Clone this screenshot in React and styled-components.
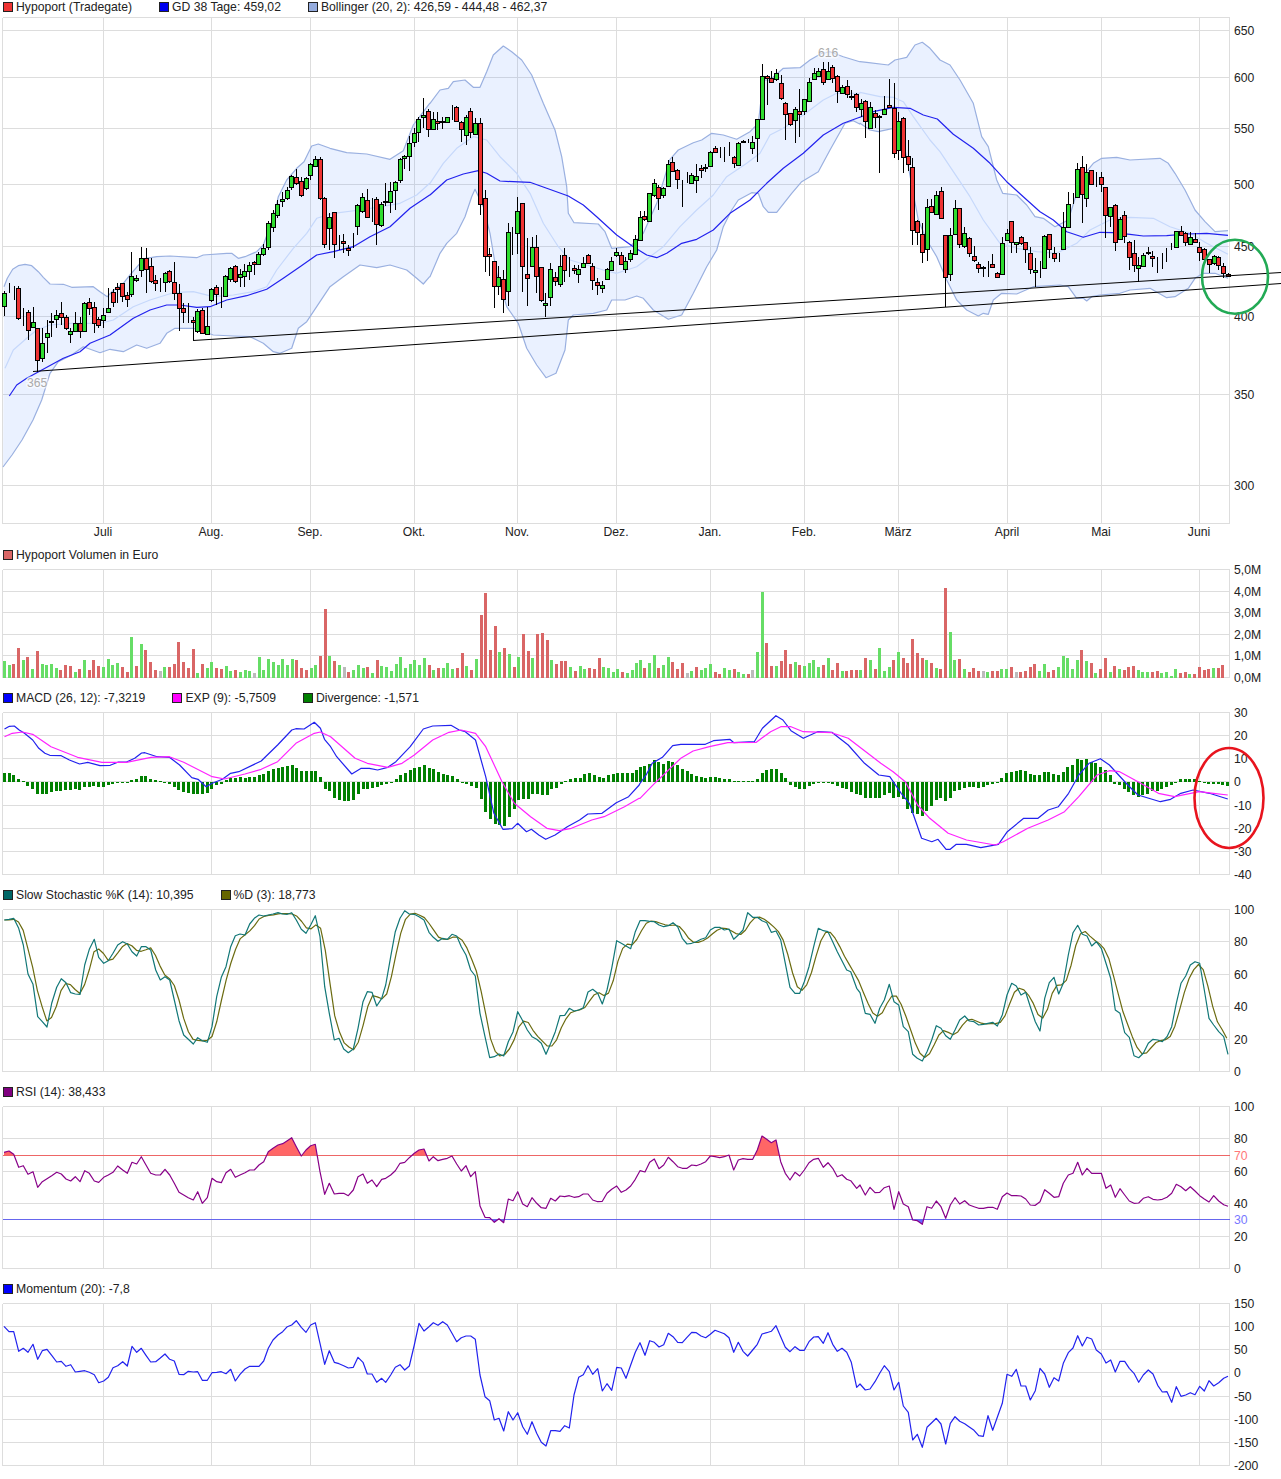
import React from 'react';
import styled, { createGlobalStyle } from 'styled-components';

const GlobalStyle = createGlobalStyle`
  html, body { margin: 0; padding: 0; background: #fff; }
  body { font-family: "Liberation Sans", Arial, sans-serif; font-size: 12.2px; color: #222; }
`;

const Page = styled.div`
  display: flex;
  flex-direction: column;
  width: 1281px;
  height: 1479px;
  overflow: hidden;
`;

const Panel = styled.section`
  display: flex;
  flex-direction: column;
`;

const Legend = styled.div`
  display: flex;
  align-items: center;
  gap: 27px;
  height: ${(p) => p.$height}px;
  padding-left: 3px;
  white-space: nowrap;
`;

const LegendItem = styled.span`
  display: flex;
  align-items: center;
  gap: 3px;
`;

const Swatch = styled.i`
  display: block;
  width: 10px;
  height: 10px;
  box-sizing: border-box;
  border: 1px solid #222;
  background: ${(p) => p.$color};
`;

const Plot = styled.svg`
  display: block;
  overflow: hidden;
`;

const GridLine = styled.line`
  stroke: #ddd;
  stroke-width: 1;
  shape-rendering: crispEdges;
`;

const LevelLine = styled.line`
  stroke: ${(p) => p.$color};
  stroke-width: 1;
  shape-rendering: crispEdges;
`;

const Curve = styled.polyline`
  fill: none;
  stroke: ${(p) => p.$color};
  stroke-width: ${(p) => p.$width || 1.2};
  stroke-linejoin: round;
`;

const Band = styled.polygon`
  fill: #5588ff;
  fill-opacity: 0.12;
  stroke: none;
`;

const Zone = styled.polygon`
  fill: ${(p) => p.$color};
  stroke: none;
`;

const AxisLabel = styled.text`
  font-family: "Liberation Sans", Arial, sans-serif;
  font-size: 12.2px;
  fill: ${(p) => p.$color || '#222'};
`;

const MonthLabel = styled(AxisLabel)`
  text-anchor: middle;
`;

const PeakLabel = styled.text`
  font-family: "Liberation Sans", Arial, sans-serif;
  font-size: 12.2px;
  fill: #aaa;
  stroke: rgba(255, 255, 255, 0.6);
  stroke-width: 3px;
  paint-order: stroke;
`;

const Wick = styled.line`
  stroke: #000;
  stroke-width: 1;
  shape-rendering: crispEdges;
`;

const Body = styled.rect`
  fill: ${(p) => p.$color};
  stroke: #000;
  stroke-width: 1;
  shape-rendering: crispEdges;
`;

const Bar = styled.rect`
  fill: ${(p) => p.$color};
  shape-rendering: crispEdges;
`;

const TrendLine = styled.line`
  stroke: #000;
  stroke-width: 1;
`;

const Marker = styled.ellipse`
  fill: none;
  stroke: ${(p) => p.$color};
  stroke-width: 2.6;
`;

const MONTHS = [
  ['Juli', 103],
  ['Aug.', 211],
  ['Sep.', 310],
  ['Okt.', 414],
  ['Nov.', 517],
  ['Dez.', 616],
  ['Jan.', 710],
  ['Feb.', 804],
  ['März', 898],
  ['April', 1007],
  ['Mai', 1101],
  ['Juni', 1199],
];
const LEFT = 2.5;
const RIGHT = 1229.5;
const STEP = 4.72;
const STEP_RIGHT = 4.7;

// all curves were read off 3x crops: [crop x, crop y offset, "x,y x,y ..."]
const toPoints = (segments) =>
  segments.flatMap(([ox, oy, text, sx = 3]) =>
    text
      .trim()
      .split(/\s+/)
      .map((pair) => {
        const [x, y] = pair.split(',').map(Number);
        return [ox + x / sx, oy + y / 3];
      })
  );

const asAttr = (points) => points.map(([x, y]) => `${x.toFixed(1)},${y.toFixed(1)}`).join(' ');

const upperBand = toPoints([
  [0, 0, '12,860 22,835 38,808 55,797 75,793 95,797 115,815 130,832 150,852 190,853 215,862 280,860 300,875 322,890 338,873 370,850 390,825 420,790 438,775 470,770 510,768 590,773 610,765 680,760 695,760 715,775 735,770 770,755 790,735 810,680 825,640 835,590 860,540 890,505 912,485 935,438 955,432 990,445 1040,458 1100,462 1170,478 1210,452 1240,375 1289,310'],
  [430, 0, '0,310 30,270 55,265 70,245 105,240 130,262 150,262 170,215 190,165 220,138 245,155 275,180 305,225 340,310 375,390 395,470 410,560 415,640 432,668 505,672 525,695 545,745 600,740 640,700 680,610 720,478 745,450 790,428 815,420 845,400 880,405 920,418 960,395 985,370 1000,240 1020,240 1060,205 1110,203 1140,180 1175,160 1200,155 1240,170 1289,185'],
  [860, 0, '0,185 20,187 85,195 105,180 140,172 165,135 187,127 210,145 240,180 270,195 300,240 340,310 365,410 385,440 410,540 428,580 470,585 500,615 525,650 550,655 585,680 625,660 650,580 675,520 700,490 725,475 770,472 810,480 900,475 925,490 945,520 975,570 1005,630 1035,665 1065,695 1104,692'],
]);

const lowerBand = toPoints([
  [0, 0, '9,1401 36,1365 66,1320 99,1260 125,1200 150,1120 175,1085 215,1065 250,1040 300,1058 330,1048 370,1055 410,1035 440,1045 480,1030 500,1000 525,985 580,985 640,1005 700,1008 750,1010 790,1030 820,1055 840,1060 875,1045 895,985 920,965 950,920 990,860 1030,830 1080,795 1130,803 1170,795 1220,810 1250,835 1270,852 1289,830'],
  [430, 0, '0,830 30,760 50,730 80,700 105,650 125,590 135,568 160,620 180,700 200,820 230,920 265,970 290,1045 320,1095 348,1133 378,1120 405,1050 415,960 430,945 490,940 530,930 545,900 585,900 620,888 640,895 670,930 715,958 755,945 790,880 830,800 860,750 880,680 905,630 925,600 965,578 985,580 1000,620 1015,637 1040,637 1085,580 1115,545 1165,515 1200,450 1245,370 1270,362 1289,372'],
  [860, 0, '0,370 30,390 55,395 100,385 130,420 175,660 200,720 230,770 260,840 290,900 320,930 355,948 370,940 385,943 400,900 425,880 470,882 520,860 600,855 625,860 650,895 670,895 680,903 695,890 720,885 780,880 810,870 870,865 920,893 945,890 985,865 1005,835 1030,820 1065,820 1104,835'],
]);

const midBand = toPoints([
  [0, 0, '15,1105 40,1050 80,1015 110,990 150,975 215,970 300,970 340,960 400,920 450,900 520,878 580,875 640,890 700,885 760,875 800,860 830,810 880,745 920,700 950,655 1000,640 1080,630 1130,622 1200,610 1250,585 1289,550'],
  [430, 0, '0,550 40,490 80,445 130,410 170,420 210,470 260,520 300,580 340,670 385,740 420,780 520,810 560,820 620,800 660,770 700,740 750,680 800,630 850,585 890,530 950,490 990,460 1020,405 1060,385 1120,345 1180,300 1220,280 1289,280'],
  [860, 0, '0,277 60,290 100,292 130,305 160,350 210,420 240,455 290,530 330,590 370,660 420,730 470,745 530,755 590,760 650,730 690,690 760,655 810,652 880,655 930,680 990,700 1040,730 1104,763'],
]);

const average38 = toPoints([
  [0, 0, '28,1188 50,1155 80,1135 120,1113 190,1075 240,1055 270,1030 330,1005 400,955 450,930 500,915 540,915 590,922 630,920 680,900 740,887 800,868 850,835 900,800 950,765 1000,755 1060,740 1110,710 1170,680 1230,625 1289,585'],
  [430, 0, '0,585 50,540 100,522 145,512 170,520 210,543 250,545 300,547 350,565 415,588 460,615 500,650 560,705 610,740 650,765 680,773 710,760 755,730 800,718 850,690 900,640 960,600 1010,550 1060,505 1120,460 1180,405 1240,370 1289,352'],
  [860, 0, '0,352 40,335 100,322 150,325 190,345 232,357 280,403 340,445 390,490 440,545 490,590 540,635 580,660 620,695 670,712 720,697 760,698 810,703 850,708 920,707 980,702 1040,700 1104,706'],
]);

// x, colour, body top, body bottom, wick top, wick bottom
const CANDLES = [
  [0, `13 g 880 918 872 948;28 k 862 862 850 880;42 k 878 878 858 900;56 r 865 955 858 960;70 k 932 932 925 978;85 r 935 990 930 1020;99 g 965 980 922 985;113 r 983 1080 983 1115;127 g 1028 1075 985 1085;142 g 998 1012 960 1060;155 r 962 967 940 1010;169 g 944 958 930 985;184 r 938 950 905 975;199 r 950 985 945 990;212 g 994 1003 985 1028;226 g 968 994 935 994;241 r 968 994 950 1015;254 g 910 994 905 994;268 r 905 925 895 945;283 r 920 968 905 998;296 r 956 974 950 985;310 g 945 960 925 985;325 g 925 937 865 937;340 r 875 906 868 920;353 r 862 868 850 910;367 r 848 888 848 905;382 r 885 897 875 922;395 g 827 882 757 890;409 g 833 841 825 845;424 g 773 810 742 830;439 r 773 808 745 880;453 r 797 843 775 850;467 r 840 850 825 872;481 k 848 848 835 875;495 g 820 847 815 875;509 r 812 843 810 850;523 r 845 880 787 900;537 r 880 925 852 992;550 r 923 937 910 970;565 k 953 953 910 970;580 r 959 967 950 1020;593 g 932 994 928 1000;607 r 930 998 925 1002;622 g 977 1003 920 1004;635 g 866 900 865 905;650 r 860 883 855 915;664 k 888 888 860 925;677 g 827 888 825 890;691 g 803 838 800 845;706 r 797 843 795 848;720 g 823 832 808 860;734 g 812 829 792 860;749 g 794 814 785 840;763 r 787 792 782 825;776 g 761 792 755 795;791 g 743 763 732 768;805 g 670 741 662 750;820 g 638 681 630 695;833 g 611 645 600 655;848 g 596 604 575 622;862 g 570 595 560 600;875 g 527 562 525 570;889 r 530 550 508 555;904 r 542 586 530 590;918 g 533 565 530 570;932 g 493 525 488 540;946 g 478 498 468 500;961 r 478 595 472 600;974 r 593 733 590 745;988 g 650 685 640 750;1003 r 637 733 635 775;1017 k 732 732 705 750;1030 r 722 730 702 760;1045 r 745 750 735 768;1060 k 714 714 700 745;1073 g 614 677 612 705;1087 g 590 633 578 640;1102 r 599 650 568 655;1116 k 618 618 595 665;1130 r 596 671 590 735;1144 g 611 676 605 680;1157 g 602 607 548 618;1171 g 572 607 546 640;1186 g 545 571 542 630;1201 g 476 541 475 548;1214 g 469 475 465 508;1228 g 428 469 408 512;1243 g 400 425 385 440;1256 g 358 397 350 425;1270 g 344 352 295 385;1285 r 332 388 328 410`],
  [430, `10 g 358 388 335 388;23 r 362 370 337 390;37 g 362 367 350 388;52 g 352 367 350 367;66 k 328 328 315 360;80 r 322 362 318 362;94 r 365 388 362 425;108 g 350 405 345 435;122 r 332 397 325 415;136 g 368 402 355 405;151 r 368 612 355 645;165 r 595 768 570 815;178 r 763 768 745 828;193 r 782 858 782 925;206 g 832 858 798 885;221 r 838 898 810 940;235 g 695 873 670 918;248 k 718 718 680 765;263 g 632 700 592 762;278 r 610 798 610 875;292 r 823 835 715 918;306 g 740 798 712 800;320 r 740 828 705 880;335 r 800 900 800 905;346 g 910 916 880 950;362 g 808 890 790 918;376 r 832 844 815 858;391 g 797 852 765 862;404 r 764 810 745 845;418 k 793 793 770 830;433 r 805 810 795 822;446 g 806 823 795 848;460 g 788 802 770 805;475 r 764 788 762 790;488 r 797 840 790 870;503 r 845 856 835 885;517 g 854 865 842 880;532 g 808 838 805 840;545 g 782 810 770 812;559 g 755 766 745 770;574 r 766 793 755 795;587 g 782 808 770 820;602 g 760 778 750 785;616 g 718 763 705 765;631 g 650 720 632 722;644 r 647 658 632 662;658 g 580 663 578 665;673 g 550 586 538 590;686 r 560 595 555 630;700 g 565 585 560 595;716 g 493 558 480 560;728 r 485 512 472 515;742 r 510 538 508 568;756 k 545 545 540 620;771 k 543 543 515 550;785 g 524 550 520 552;800 g 527 541 493 578;814 r 503 511 495 533;827 g 500 504 492 515;842 g 455 498 452 500;856 r 445 456 438 460;871 k 458 458 440 475;884 k 455 455 440 485;898 k 446 446 425 468;913 r 470 488 468 503;926 g 428 495 426 497;940 g 422 426 420 428;954 k 424 424 418 430;968 g 425 445 408 462;983 g 358 414 358 485;997 g 227 358 192 360;1012 r 227 233 225 315;1025 r 235 247 212 250;1040 g 218 238 208 242;1054 r 248 295 226 300;1067 r 310 343 305 420;1081 r 340 373 338 378;1096 g 326 360 322 428;1109 r 334 342 268 410;1124 g 298 333 296 345;1138 g 245 303 235 305;1153 g 220 238 205 240;1166 g 212 228 205 232;1181 r 207 246 185 255;1195 g 212 237 185 240;1208 r 200 235 196 250;1222 r 228 272 226 308;1237 g 260 280 256 282;1252 r 257 283 240 295;1265 g 287 291 270 300;1279 r 282 322 280 335`],
  [860, `3 g 308 326 298 352;16 r 302 363 300 415;31 g 320 385 305 388;45 r 338 352 330 385;59 g 347 352 345 518;73 g 326 343 288 345;88 r 314 320 238 320;103 r 323 460 250 475;116 g 362 450 335 480;130 r 353 472 350 518;145 r 467 492 420 512;157 r 500 690 475 735;172 r 664 696 660 735;187 r 703 756 670 788;202 g 620 748 598 782;215 r 617 637 598 640;229 g 584 642 572 645;244 r 572 654 562 656;257 r 704 832 704 920;271 g 704 823 685 842;286 g 625 703 600 705;299 r 625 733 625 745;314 g 698 738 682 745;328 r 715 760 712 770;343 r 769 780 738 785;356 r 793 804 785 818;370 r 800 804 798 832;385 k 800 800 783 832;398 r 791 802 762 805;412 r 820 832 815 835;427 g 730 823 712 825;441 g 700 720 688 722;455 r 664 726 664 758;470 g 727 732 725 760;484 r 712 730 708 735;497 r 727 748 725 788;512 r 760 808 742 822;526 g 811 816 775 862;540 k 797 797 782 835;554 g 709 805 706 808;568 r 703 748 702 775;583 r 760 775 740 785;597 k 770 770 760 787;611 g 680 748 635 750;625 g 613 680 576 680;639 k 607 607 580 612;653 g 508 591 490 592;667 r 500 583 468 668;680 g 517 595 492 620;694 r 511 553 510 555;708 k 551 551 516 562;724 r 532 553 516 575;736 r 562 646 562 715;751 g 622 648 620 680;766 r 614 726 612 752;780 g 656 718 650 720;794 r 646 709 632 728;808 r 727 772 722 810;823 r 760 796 720 815;836 g 796 805 770 845;850 g 766 798 760 800;865 g 755 760 740 765;878 r 767 775 752 802;892 k 776 776 770 820;907 k 769 769 760 806;920 k 758 758 745 785;935 k 743 743 730 750;949 g 694 741 692 742;964 r 692 706 678 708;977 r 698 727 695 738;991 g 710 733 695 735;1006 r 716 727 700 730;1018 r 740 757 725 782;1033 r 748 778 745 780;1048 r 778 793 776 820;1063 g 767 790 765 795;1076 r 770 796 768 810;1091 r 799 820 788 835;1104 r 822 829 820 830`],
].flatMap(([ox, text]) =>
  text.split(';').map((row) => {
    const [x, kind, top, bottom, high, low] = row.split(' ');
    return {
      x: Math.floor(ox + x / 3),
      kind,
      top: Math.round(top / 3),
      bottom: Math.round(bottom / 3),
      high: Math.round(high / 3),
      low: Math.round(low / 3),
    };
  })
);

const VOLUME_LEFT = 'g423 g435 r432 r384 g420 r411 g447 r393 g432 g435 g432 g444 r450 r435 r438 g456 r447 g420 r450 r420 r438 g441 g417 g435 g429 r441 r456 g351 r438 g372 r390 r426 r450 n453 g441 r441 r432 r366 r426 r444 r387 g459 r432 g444 g426 r444 r447 g438 g453 r450 g456 g450 g453 n459 g411 g450 g417 g426 g435 g417 g435 g417 r420 r444 r450 g444 g435 r408 r267 g408 r423 g435 n441 r456 g450 g435 g444 r441 g459 r420 g438 g441 g453 g432 g411 g444 g432 g420 g435 g414 r435 g450 r444 g444 g429 g447 r444 r399 g438 r450 g417 r285 r219 r390 r318 g396 r384 g402 r441 g411 r342 r393 g414 r342 r339 r360 g420 r432 r423 r423 g441 r453 g438 g447 r444 r447 r414 g441 g444 g456 g447 r456 g459 g450 g429';
const VOLUME_RIGHT = 'g420 r444 g429 g405 r444 g435 g411 r426 r447 r429 n459 g453 r441 g450 g444 g432 r456 r462 g444 g450 r447 g456 g462 r462 n450 g396 g216 r369 r438 g438 r423 r390 r432 g426 r435 g438 g429 g420 g441 r435 g414 r450 r429 g453 r453 r450 r450 g450 r414 g420 r447 g384 g453 g441 r420 g396 r414 r429 r357 r399 r414 g420 r429 g444 r447 r204 g336 g420 r417 g447 r456 r444 r453 n453 g456 r453 r453 g447 g447 r441 n456 r456 r453 r441 r432 g453 g432 r456 r450 g441 g408 g414 g447 g420 r390 g423 r429 g459 r447 r414 g456 r438 g447 r450 r441 r438 g450 g456 g456 r456 r453 g459 g456 g468 g447 r459 r456 g462 r462 r441 r450 r447 g444 r444 r435';
const VOLUME_COLORS = { g: '#66dd66', r: '#d96666', n: '#bbbbbb' };

const volumeBars = [
  [4.3, STEP, VOLUME_LEFT],
  [640, STEP_RIGHT, VOLUME_RIGHT],
].flatMap(([start, step, text]) =>
  text.split(' ').map((item, i) => ({
    x: start + i * step,
    color: VOLUME_COLORS[item[0]],
    top: 520 + Number(item.slice(1)) / 3,
  }))
);

const DIVERGENCE_LEFT = [26, 26, 20, 8, 2, -12, -20, -35, -37, -37, -30, -27, -26, -25, -25, -22, -25, -15, -15, -13, -15, -15, -10, -7, -3, -2, -2, 5, 10, 17, 17, 10, 5, 2, -3, -6, -14, -24, -30, -34, -36, -36, -36, -33, -20, -10, -6, 6, 13, 13, 14, 13, 16, 16, 20, 24, 32, 40, 42, 45, 48, 50, 42, 34, 32, 32, 32, 14, -20, -28, -47, -53, -57, -58, -55, -36, -22, -20, -17, -15, -10, -5, -2, 10, 22, 28, 36, 42, 46, 50, 42, 40, 30, 24, 20, 17, 8, -3, -5, -12, -18, -50, -90, -112, -125, -128, -132, -105, -80, -55, -52, -50, -35, -36, -40, -38, -22, -18, -6, 3, 8, 13, 13, 23, 26, 20, 15, 13, 20, 25, 28, 28, 28, 26, 35];
const DIVERGENCE_RIGHT = [45, 47, 55, 65, 60, 55, 62, 60, 50, 40, 32, 25, 18, 15, 13, 16, 16, 12, 10, 10, 2, 2, 4, 2, 2, 8, 28, 36, 40, 40, 28, 12, -10, -15, -22, -22, -13, -5, -2, -3, -3, -5, -12, -18, -22, -30, -35, -40, -48, -47, -47, -47, -38, -32, -47, -45, -52, -80, -92, -95, -102, -88, -72, -55, -47, -57, -47, -28, -25, -17, -14, -16, -17, -16, -10, -7, -4, 12, 26, 31, 34, 37, 34, 24, 22, 20, 29, 29, 25, 22, 30, 46, 50, 68, 66, 68, 60, 58, 46, 35, 20, -6, -10, -20, -30, -40, -45, -40, -35, -28, -28, -20, -15, -10, -3, 8, 8, 10, 10, 3, -3, -5, -5, -7, -8, -12];

const divergenceBars = [
  ...DIVERGENCE_LEFT.map((value, i) => ({ x: 4.3 + i * STEP, value })),
  ...DIVERGENCE_RIGHT.map((value, i) => ({ x: 640 + i * STEP_RIGHT, value })),
];

const macdLine = toPoints([
  [0, 520, '11,627 23,619 35,618 47,630 60,640 80,660 95,685 110,700 122,706 150,707 170,720 195,732 215,727 245,737 270,736 290,726 310,726 330,715 347,699 355,698 385,710 415,712 440,735 470,773 485,778 505,800 520,790 545,778 565,760 585,755 640,723 680,675 715,630 725,626 745,627 770,607 785,625 795,658 810,680 825,710 862,762 885,745 905,745 925,750 950,742 970,725 1005,680 1037,627 1060,618 1105,616 1125,630 1140,635 1165,660 1190,770 1210,880 1232,928 1255,926 1268,910 1290,935 1302,928 1320,945 1337,958 1360,945 1390,920 1420,900 1440,882 1475,880 1510,848 1540,830 1566,795', 2.45],
  [640, 520, '0,790 15,765 30,730 55,712 80,677 100,673 160,673 180,662 220,658 230,668 280,665 300,625 333,587 350,600 370,632 400,655 435,635 470,637 510,675 550,730 585,765 612,770 640,820 660,850 690,955 715,965 730,958 750,988 760,988 775,973 800,973 835,983 878,973 900,935 940,895 975,895 1000,870 1025,860 1050,820 1075,765 1100,730 1128,716 1150,735 1195,795 1220,825 1275,845 1300,838 1325,820 1355,810 1395,820 1440,837', 2.45],
]);

const expLine = toPoints([
  [0, 520, '11,650 30,640 55,636 80,643 125,680 190,712 250,727 310,727 370,712 415,710 450,727 520,770 550,777 600,762 640,748 680,725 725,670 770,640 785,636 810,650 870,715 900,730 950,742 985,730 1015,705 1060,660 1100,637 1130,630 1165,640 1190,680 1230,785 1260,850 1300,890 1340,925 1370,932 1400,925 1450,900 1480,890 1530,860 1566,835', 2.45],
  [640, 520, '0,835 40,785 100,715 130,693 170,680 215,668 285,667 320,635 345,620 370,620 400,635 470,638 510,655 590,730 620,755 650,785 680,855 710,895 755,940 800,960 870,975 890,965 950,925 1000,900 1040,875 1075,830 1120,765 1150,752 1175,755 1220,785 1270,820 1310,830 1370,815 1405,820 1440,825', 2.45],
]);

const stochK = toPoints([
  [0, 900, '13,60 27,58 41,55 56,85 70,135 84,222 99,253 113,350 127,365 141,381 155,310 170,262 184,236 198,248 212,278 226,282 240,283 254,195 268,148 283,118 296,172 311,190 325,182 339,160 353,135 368,125 382,132 396,155 410,168 424,140 438,140 452,150 467,210 481,240 495,230 509,240 523,300 537,362 551,405 565,418 580,432 593,413 607,422 622,427 636,380 650,290 664,232 678,200 692,140 706,107 720,102 735,105 749,72 763,55 777,45 791,48 805,45 819,42 834,38 848,42 862,43 875,38 889,60 904,88 918,100 932,75 946,47 960,110 974,260 988,340 1003,420 1017,415 1031,447 1045,458 1060,447 1074,385 1089,305 1102,275 1116,277 1130,318 1145,295 1157,255 1172,170 1186,95 1200,55 1214,32 1228,42 1243,43 1257,50 1272,60 1287,97'],
  [430, 900, '10,112 24,124 38,115 52,118 66,103 80,108 94,140 108,165 122,210 136,228 150,340 165,410 179,473 193,470 207,462 221,468 235,425 249,396 263,335 278,362 292,390 306,410 320,418 334,430 348,463 362,430 376,395 390,347 404,346 418,325 432,333 446,330 460,323 474,276 488,268 503,280 517,312 531,270 545,205 560,122 574,130 588,138 602,146 616,95 630,62 645,62 659,64 673,65 687,75 701,80 715,77 729,68 743,80 757,115 771,132 785,130 799,125 813,118 827,113 841,90 855,82 869,82 883,90 897,87 911,118 925,105 939,90 953,38 968,52 982,52 996,62 1010,68 1024,97 1038,93 1052,120 1066,190 1080,262 1095,280 1109,280 1123,245 1137,200 1151,140 1165,85 1180,92 1194,95 1208,125 1222,155 1250,210 1262,215 1280,265'],
  [860, 900, '0,278 16,340 30,343 45,370 59,325 73,300 88,253 102,305 116,315 130,380 145,395 158,463 172,475 187,483 201,455 215,420 229,377 243,385 257,407 271,418 285,390 299,360 314,348 328,363 342,365 356,375 370,373 384,370 398,367 412,378 427,345 441,285 455,250 469,258 483,285 497,277 511,320 526,365 540,393 554,295 568,248 582,232 596,282 610,250 625,165 639,98 653,76 667,103 681,108 695,138 709,125 724,145 738,190 752,235 766,330 780,340 794,398 808,412 822,467 836,473 850,460 865,430 879,418 893,420 907,425 921,410 935,380 949,310 963,250 977,228 991,195 1005,185 1019,190 1033,270 1047,355 1061,375 1076,395 1091,410 1104,463'],
]);

// %D is the 3 day mean of %K, so it is worked out instead of read off
const valueAt = (points, x) => {
  const next = points.findIndex((p) => p[0] >= x);
  if (next <= 0) return points[next < 0 ? points.length - 1 : 0][1];
  const [x0, y0] = points[next - 1];
  const [x1, y1] = points[next];
  return y0 + ((y1 - y0) * (x - x0)) / (x1 - x0 || 1);
};

const stochD = [];
for (let x = stochK[0][0]; x <= 1228; x += STEP) {
  const mean = [0, 1, 2].reduce((sum, back) => sum + valueAt(stochK, Math.max(x - back * STEP, stochK[0][0])), 0) / 3;
  stochD.push([x, mean]);
}

const rsiLine = toPoints([
  [0, 900, '12,757 27,753 41,763 56,802 70,797 84,823 99,815 113,862 127,845 141,836 155,827 170,817 184,822 198,837 212,843 226,830 240,845 254,812 268,820 283,843 296,847 311,832 325,825 339,817 353,798 368,810 382,820 396,787 410,792 424,770 438,795 452,820 467,825 481,825 495,808 509,825 523,850 537,877 551,885 565,893 580,900 593,875 607,910 622,893 636,835 650,845 664,848 678,818 692,808 706,832 720,825 735,818 749,810 763,810 777,795 791,785 805,755 819,745 834,735 848,731 862,722 875,713 889,740 904,768 918,750 932,737 946,733 960,815 974,883 988,850 1003,882 1017,880 1031,880 1045,887 1060,870 1074,830 1089,822 1102,850 1116,840 1130,860 1145,838 1157,835 1172,825 1186,812 1200,790 1214,787 1228,773 1243,760 1257,750 1272,747 1287,783'],
  [430, 900, '10,770 24,782 38,778 52,775 66,768 80,792 94,813 108,797 122,830 136,815 150,918 165,952 179,953 193,967 207,956 221,968 235,897 249,902 263,875 278,912 292,920 306,893 320,910 334,923 348,925 362,895 376,903 390,888 404,890 418,887 432,892 446,890 460,882 474,882 488,900 503,905 517,904 531,880 545,868 560,858 574,877 588,870 602,858 616,838 630,812 645,816 659,787 673,777 687,806 701,795 715,772 729,785 743,800 757,805 771,805 785,795 799,797 813,792 827,785 841,768 855,770 869,773 883,770 897,765 911,810 925,780 939,776 953,778 968,778 982,750 996,708 1010,718 1024,728 1038,720 1052,785 1066,820 1080,840 1095,817 1109,828 1123,810 1137,788 1151,778 1165,775 1180,802 1194,788 1208,805 1222,830 1236,824 1250,838 1262,842 1280,865'],
  [860, 900, '0,855 16,885 30,862 45,878 59,877 73,863 88,858 102,928 116,875 130,912 145,920 158,960 172,962 187,973 201,920 215,925 229,903 243,920 257,955 271,915 285,893 299,912 314,902 328,915 342,920 356,925 370,925 384,922 398,922 412,928 427,890 441,879 455,887 469,887 483,888 497,897 511,915 526,916 540,905 554,869 568,880 582,892 596,890 610,850 625,825 639,820 653,787 667,825 681,805 695,820 709,820 724,820 738,865 752,855 766,892 780,866 794,885 808,903 822,910 836,909 850,895 865,890 879,898 893,900 907,898 921,892 935,880 949,853 963,860 977,872 991,860 1005,873 1019,887 1033,897 1047,906 1061,887 1076,903 1091,914 1104,919'],
]);

const momentumLine = toPoints([
  [0, 1280, '12,139 27,155 41,155 56,214 70,205 84,217 99,193 113,238 127,212 141,208 155,226 170,246 184,244 198,259 212,254 226,276 240,274 254,272 268,277 283,284 296,308 311,303 325,292 339,263 353,257 368,245 382,258 396,199 410,217 424,205 438,226 452,246 467,245 481,234 495,222 509,238 523,243 537,283 551,284 565,274 580,276 593,275 607,301 622,301 636,278 650,277 664,275 678,281 692,268 706,303 720,283 735,267 749,259 763,259 777,259 791,243 805,205 819,180 834,165 848,155 862,140 875,135 889,122 904,142 918,157 932,135 946,128 960,190 974,253 988,212 1003,247 1017,251 1031,257 1045,264 1060,262 1074,232 1089,247 1102,282 1116,282 1130,307 1145,295 1157,307 1172,285 1186,262 1200,254 1214,270 1228,258 1243,195 1257,130 1272,153 1287,140'],
  [430, 1280, '10,128 24,136 38,125 52,135 66,160 80,185 94,173 108,168 122,168 136,178 150,285 165,350 179,362 193,420 207,415 221,453 235,395 249,420 263,398 278,440 292,463 306,425 320,460 334,487 348,498 362,452 376,452 390,454 404,437 418,444 432,345 446,292 460,284 474,257 488,283 503,266 517,333 531,311 545,331 560,262 574,264 588,295 602,255 616,217 630,188 645,226 659,182 673,187 687,201 701,194 715,160 729,170 743,187 757,188 771,172 785,157 799,158 813,168 827,173 841,163 855,151 869,156 883,161 897,173 911,217 925,187 939,214 953,228 968,210 982,193 996,162 1010,158 1024,154 1038,137 1052,170 1066,202 1080,215 1095,200 1109,211 1123,211 1137,185 1151,171 1165,170 1180,190 1194,158 1208,193 1222,214 1236,205 1250,217 1264,247 1280,322'],
  [860, 1280, '0,312 16,330 30,327 45,305 59,280 73,257 88,275 102,330 116,307 130,378 145,397 158,480 172,463 187,502 201,442 215,428 229,415 243,432 257,492 271,430 285,410 299,424 314,431 328,441 342,451 356,467 370,469 384,407 398,451 412,412 427,370 441,283 455,289 469,268 483,318 497,318 511,360 526,332 540,265 554,282 568,322 582,293 596,303 610,250 625,218 639,204 653,167 667,198 681,172 695,177 709,210 724,222 738,249 752,240 766,276 780,244 794,244 808,265 822,280 836,307 850,285 865,270 879,282 893,316 907,336 921,335 935,367 949,320 963,349 977,345 991,338 1005,344 1019,319 1033,333 1047,302 1061,318 1076,308 1091,295 1104,289'],
]);

const ChartPanel = ({ legend, legendHeight = 15, top, height, ticks, children, extra }) => {
  const gridTop = ticks[0][1];
  const gridBottom = ticks[ticks.length - 1][1];
  return (
    <Panel>
      <Legend $height={legendHeight}>
        {legend.map(([label, color]) => (
          <LegendItem key={label}>
            <Swatch $color={color} />
            {label}
          </LegendItem>
        ))}
      </Legend>
      <Plot width="1281" height={height} viewBox={`0 ${top} 1281 ${height}`}>
        {ticks.map(([label, y]) => (
          <GridLine key={label} x1={LEFT} x2={RIGHT} y1={y} y2={y} />
        ))}
        {extra}
        {[LEFT, ...MONTHS.map((m) => m[1] + 0.5), RIGHT].map((x) => (
          <GridLine key={x} x1={x} x2={x} y1={gridTop} y2={gridBottom} />
        ))}
        {ticks
          .filter(([label]) => label.trim() !== '')
          .map(([label, y, color]) => (
            <AxisLabel key={label} x="1234" y={y + 4} $color={color}>
              {label}
            </AxisLabel>
          ))}
        {children}
      </Plot>
    </Panel>
  );
};

const App = () => (
  <Page>
    <GlobalStyle />
    <ChartPanel
      legendHeight={14}
      top={14}
      height={533}
      legend={[
        ['Hypoport (Tradegate)', '#ee3333'],
        ['GD 38 Tage: 459,02', '#0000ee'],
        ['Bollinger (20, 2): 426,59 - 444,48 - 462,37', '#94abdd'],
      ]}
      ticks={[
        ['', 17.5],
        ['650', 30.5],
        ['600', 77.5],
        ['550', 128.5],
        ['500', 184.5],
        ['450', 246.5],
        ['400', 316.5],
        ['350', 394.5],
        ['300', 485.5],
        [' ', 523.5],
      ]}
    >
      <Band points={asAttr([...upperBand, ...[...lowerBand].reverse()])} />
      <Curve points={asAttr(midBand)} $color="#c6d8fb" />
      <Curve points={asAttr(upperBand)} $color="#9ab0e0" />
      <Curve points={asAttr(lowerBand)} $color="#9ab0e0" />
      <Curve points={asAttr(average38)} $color="#2222ee" />
      {CANDLES.map((c) => (
        <g key={c.x}>
          <Wick x1={c.x + 0.5} x2={c.x + 0.5} y1={c.high} y2={c.low} />
          <Body
            x={c.x - 1.5}
            y={c.top + 0.5}
            width="4"
            height={Math.max(c.bottom - c.top, 0)}
            $color={c.kind === 'g' ? '#2fdc2f' : c.kind === 'r' ? '#ee3333' : '#000'}
          />
        </g>
      ))}
      <TrendLine x1="33" y1="371.5" x2="1281" y2="283.5" />
      <TrendLine x1="193" y1="340.5" x2="1281" y2="272.5" />
      <PeakLabel x="27" y="387">365</PeakLabel>
      <PeakLabel x="818" y="57">616</PeakLabel>
      {MONTHS.map(([label, x]) => (
        <MonthLabel key={label} x={x} y="536">
          {label}
        </MonthLabel>
      ))}
      <Marker cx="1235" cy="276.7" rx="33" ry="37" $color="#22aa55" />
    </ChartPanel>

    <ChartPanel
      top={562}
      height={128}
      legend={[['Hypoport Volumen in Euro', '#d96666']]}
      ticks={[
        ['5,0M', 569.5],
        ['4,0M', 591.5],
        ['3,0M', 612.5],
        ['2,0M', 634.5],
        ['1,0M', 655.5],
        ['0,0M', 677.5],
      ]}
    >
      {volumeBars.map((b) => (
        <Bar key={b.x} x={Math.round(b.x - 1.5)} y={b.top} width="3" height={677.7 - b.top} $color={b.color} />
      ))}
    </ChartPanel>

    <ChartPanel
      top={705}
      height={182}
      legend={[
        ['MACD (26, 12): -7,3219', '#0000ff'],
        ['EXP (9): -5,7509', '#ff00ff'],
        ['Divergence: -1,571', '#008000'],
      ]}
      ticks={[
        ['30', 712.5],
        ['20', 735.5],
        ['10', 758.5],
        ['0', 781.5],
        ['-10', 805.5],
        ['-20', 828.5],
        ['-30', 851.5],
        ['-40', 874.5],
      ]}
    >
      {divergenceBars.map((b) => (
        <Bar
          key={b.x}
          x={Math.round(b.x - 1.5)}
          y={b.value > 0 ? 782 - b.value / 3 : 782}
          width="3"
          height={Math.max(Math.abs(b.value) / 3, 0.8)}
          $color="#008000"
        />
      ))}
      <Curve points={asAttr(macdLine)} $color="#2222ee" />
      <Curve points={asAttr(expLine)} $color="#ff22ff" />
      <Marker cx="1229" cy="798" rx="34.5" ry="50" $color="#e8141e" />
    </ChartPanel>

    <ChartPanel
      top={902}
      height={182}
      legend={[
        ['Slow Stochastic %K (14): 10,395', '#006666'],
        ['%D (3): 18,773', '#666600'],
      ]}
      ticks={[
        ['100', 909.5],
        ['80', 941.5],
        ['60', 974.5],
        ['40', 1006.5],
        ['20', 1039.5],
        ['0', 1071.5],
      ]}
    >
      <Curve points={asAttr(stochD)} $color="#6b6b10" />
      <Curve points={asAttr(stochK)} $color="#117777" />
    </ChartPanel>

    <ChartPanel
      top={1099}
      height={182}
      legend={[['RSI (14): 38,433', '#800080']]}
      ticks={[
        ['100', 1106.5],
        ['80', 1138.5],
        ['60', 1171.5],
        ['40', 1203.5],
        ['20', 1236.5],
        ['0', 1268.5],
      ]}
      extra={
        <>
          <clipPath id="above70">
            <rect x="0" y="1099" width="1281" height="56.5" />
          </clipPath>
          <clipPath id="below30">
            <rect x="0" y="1219.5" width="1281" height="50" />
          </clipPath>
        </>
      }
    >
      <Zone
        clipPath="url(#above70)"
        points={asAttr([[4, 1155.5], ...rsiLine, [1228, 1155.5]])}
        $color="#ff6666"
      />
      <Zone
        clipPath="url(#below30)"
        points={asAttr([[4, 1219.5], ...rsiLine, [1228, 1219.5]])}
        $color="#6666ff"
      />
      <LevelLine x1={LEFT} x2={RIGHT} y1="1155.5" y2="1155.5" $color="#ee6666" />
      <LevelLine x1={LEFT} x2={RIGHT} y1="1219.5" y2="1219.5" $color="#6666ee" />
      <AxisLabel x="1234" y="1159.5" $color="#ff7777">70</AxisLabel>
      <AxisLabel x="1234" y="1223.5" $color="#7777ff">30</AxisLabel>
      <Curve points={asAttr(rsiLine)} $color="#880088" />
    </ChartPanel>

    <ChartPanel
      top={1296}
      height={183}
      legend={[['Momentum (20): -7,8', '#0000ff']]}
      ticks={[
        ['150', 1303.5],
        ['100', 1326.5],
        ['50', 1349.5],
        ['0', 1372.5],
        ['-50', 1396.5],
        ['-100', 1419.5],
        ['-150', 1442.5],
        ['-200', 1465.5],
      ]}
    >
      <Curve points={asAttr(momentumLine)} $color="#2222ee" />
    </ChartPanel>
  </Page>
);

export default App;
